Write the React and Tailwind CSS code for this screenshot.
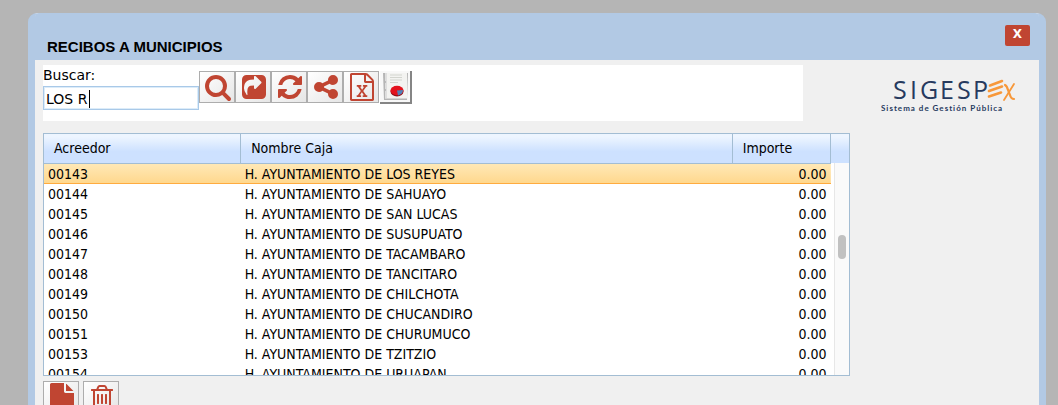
import React from "react";

const ICONS = {
  search:
    "M1216 832q0-185-131.5-316.5t-316.5-131.5-316.5 131.5-131.5 316.5 131.5 316.5 316.5 131.5 316.5-131.5 131.5-316.5zm512 832q0 52-38 90t-90 38q-54 0-90-38l-343-342q-179 124-399 124-143 0-273.5-55.5t-225-150-150-225-55.5-273.5 55.5-273.5 150-225 225-150 273.5-55.5 273.5 55.5 225 150 150 225 55.5 273.5q0 220-124 399l343 343q37 37 37 90z",
  share:
    "M1005 1005l352-352q19-19 19-45t-19-45l-352-352q-30-31-69-14-40 17-40 59v160q-119 0-216 19.5t-162.5 51-114 79-76.5 95.5-44.5 109-21.5 111.5-5 110.5q0 181 167 404 11 12 25 12 7 0 13-3 22-9 19-33-44-354 62-473 46-52 130-75.5t224-23.5v160q0 42 40 59 12 5 24 5 26 0 45-19zM1664 416v960q0 119-84.5 203.5t-203.5 84.5h-960q-119 0-203.5-84.5t-84.5-203.5v-960q0-119 84.5-203.5t203.5-84.5h960q119 0 203.5 84.5t84.5 203.5z",
  refresh:
    "M1639 1056q0 5-1 7-64 268-268 434.5t-478 166.5q-146 0-282.5-55t-243.5-157l-129 129q-19 19-45 19t-45-19-19-45v-448q0-26 19-45t45-19h448q26 0 45 19t19 45-19 45l-137 137q71 66 161 102t187 36q134 0 250-65t186-179q11-17 53-117 8-23 30-23h192q13 0 22.5 9.5t9.5 22.5zm25-800v448q0 26-19 45t-45 19h-448q-26 0-45-19t-19-45 19-45l138-138q-148-137-349-137-134 0-250 65t-186 179q-11 17-53 117-8 23-30 23h-199q-13 0-22.5-9.5t-9.5-22.5v-7q65-268 270-434.5t480-166.5q146 0 284 55.5t245 156.5l130-129q19-19 45-19t45 19 19 45z",
  nodes:
    "M1344 1024q133 0 226.5 93.5t93.5 226.5-93.5 226.5-226.5 93.5-226.5-93.5-93.5-226.5q0-12 2-34l-360-180q-92 86-218 86-133 0-226.5-93.5t-93.5-226.5 93.5-226.5 226.5-93.5q126 0 218 86l360-180q-2-22-2-34 0-133 93.5-226.5t226.5-93.5 226.5 93.5 93.5 226.5-93.5 226.5-226.5 93.5q-126 0-218-86l-360 180q2 22 2 34t-2 34l360 180q92-86 218-86z",
  excel:
    "M1596 380q28 28 48 76t20 88v1152q0 40-28 68t-68 28h-1344q-40 0-68-28t-28-68v-1600q0-40 28-68t68-28h896q40 0 88 20t76 48zm-444-244v376h376q-10-29-22-41l-313-313q-12-12-41-22zm384 1528v-1024h-416q-40 0-68-28t-28-68v-416h-768v1536h1280zm-979-234v106h281v-106h-75l103-161q5-7 10-16.5t7.5-13.5 3.5-4h2q1 4 5 10 2 4 4.5 7.5t6 8 6.5 8.5l107 161h-76v106h291v-106h-68l-192-273 195-282h67v-107h-279v107h74l-103 159q-4 7-10 16.5t-9 13.5l-2 3h-2q-1-4-5-10-6-11-17-23l-106-159h76v-107h-290v107h68l189 272-194 283h-68z",
  file:
    "M1152 512v-472q22 14 36 28l408 408q14 14 28 36h-472zm-128 32q0 40 28 68t68 28h544v1056q0 40-28 68t-68 28h-1344q-40 0-68-28t-28-68v-1600q0-40 28-68t68-28h800v544z",
  trash:
    "M704 736v576q0 14-9 23t-23 9h-64q-14 0-23-9t-9-23v-576q0-14 9-23t23-9h64q14 0 23 9t9 23zm256 0v576q0 14-9 23t-23 9h-64q-14 0-23-9t-9-23v-576q0-14 9-23t23-9h64q14 0 23 9t9 23zm256 0v576q0 14-9 23t-23 9h-64q-14 0-23-9t-9-23v-576q0-14 9-23t23-9h64q14 0 23 9t9 23zm128 724v-948h-896v948q0 22 7 40.5t14.5 27 10.5 8.5h832q3 0 10.5-8.5t14.5-27 7-40.5zm-672-1076h448l-48-117q-7-9-17-11h-317q-10 2-17 11zm928 32v64q0 14-9 23t-23 9h-96v948q0 83-47 143.5t-113 60.5h-832q-66 0-113-58.5t-47-141.5v-952h-96q-14 0-23-9t-9-23v-64q0-14 9-23t23-9h309l70-167q15-37 54-63t79-26h320q40 0 79 26t54 63l70 167h309q14 0 23 9t9 23z",
};

const TOOLS = [
  ["search", "Buscar"],
  ["share", "Enviar"],
  ["refresh", "Actualizar"],
  ["nodes", "Compartir"],
  ["excel", "Exportar a Excel"],
];

const ROWS = [
  ["00143", "H. AYUNTAMIENTO DE LOS REYES"],
  ["00144", "H. AYUNTAMIENTO DE SAHUAYO"],
  ["00145", "H. AYUNTAMIENTO DE SAN LUCAS"],
  ["00146", "H. AYUNTAMIENTO DE SUSUPUATO"],
  ["00147", "H. AYUNTAMIENTO DE TACAMBARO"],
  ["00148", "H. AYUNTAMIENTO DE TANCITARO"],
  ["00149", "H. AYUNTAMIENTO DE CHILCHOTA"],
  ["00150", "H. AYUNTAMIENTO DE CHUCANDIRO"],
  ["00151", "H. AYUNTAMIENTO DE CHURUMUCO"],
  ["00153", "H. AYUNTAMIENTO DE TZITZIO"],
  ["00154", "H. AYUNTAMIENTO DE URUAPAN"],
];

function ToolButton({ icon, label }) {
  return (
    <button
      type="button"
      aria-label={label}
      className="flex h-8 w-9 shrink-0 items-center justify-center border border-[#adadad] bg-linear-to-br from-white to-[#e6e6e6] pl-0.5 text-[#c04532]"
    >
      <svg viewBox="0 0 1792 1792" className="size-7 shrink-0" fill="currentColor" fillRule="evenodd" aria-hidden="true">
        <path d={ICONS[icon]} />
      </svg>
    </button>
  );
}

function ReportIcon() {
  return (
    <svg viewBox="0 0 27 28" className="h-7 w-[27px]" aria-hidden="true">
      <path d="M1 0H26L25 27H2Z" fill="#b5b5b5" />
      <path d="M3 0H25V25.500H3Z" fill="#f3f3f1" />
      <path d="M3 0H5V25H3Z" fill="#dedede" />
      <path d="M3 9H4M3 17H4" stroke="#999" />
      <path d="M8 2H20M8 4.500H20M8 7H20M8 9.500H16" stroke="#d3d5cf" />
      <ellipse cx="15" cy="18.500" rx="6.500" ry="5" fill="#8d1019" />
      <ellipse cx="15" cy="17.500" rx="6.500" ry="4.700" fill="#e3121d" />
      <path d="M15 17.500L21 17Q21 21 16 22.500Z" fill="#4f84bb" />
    </svg>
  );
}

function Logo() {
  return (
    <svg viewBox="0 0 136 38" className="h-[38px] w-[136px] shrink-0" role="img" aria-label="SIGESPEX">
      <g fill="#263a5e">
        <text x="12 29 39 59 76 92" y="22" fontSize="25" fontFamily="'Open Sans', 'Noto Sans', sans-serif">SIGESP</text>
        <text x="0" y="34" fontSize="8" fontWeight="700" fontFamily="Lato, sans-serif" className="tracking-[1px]">Sistema de Gestión Pública</text>
      </g>
      <g fill="none" stroke="#f7983a" strokeLinecap="round">
        <path d="M109 8.500L121 4" strokeWidth="2.600" />
        <path d="M108 14L121 9.500" strokeWidth="2.600" />
        <path d="M108 19.500L120 15.500" strokeWidth="2.600" />
        <path d="M124 8Q126 9 127 13L129 18Q130 22 133 22" strokeWidth="2.200" />
        <path d="M133 7L123 23" strokeWidth="1.800" />
      </g>
    </svg>
  );
}

export default function App() {
  return (
    <div className="h-screen overflow-hidden bg-[#b5b5b5] pt-[13px] pr-3 pl-7 font-['DejaVu_Sans_Condensed','DejaVu_Sans',sans-serif] text-sm text-black">
      <main className="min-h-screen rounded-t-[9px] border-x-7 border-[#b2c9e4] bg-[#f0f0f0]">
        <header className="flex h-[47px] items-start justify-between rounded-t-sm bg-[#b2c9e4] pt-3 pr-[9px] pl-3">
          <h1 className="pt-3 font-['Liberation_Sans',Arial,sans-serif] text-[15px] leading-5 font-bold">RECIBOS A MUNICIPIOS</h1>
          <button type="button" aria-label="Cerrar" className="flex h-[21px] w-[25px] items-start justify-center rounded-xs bg-[#c04532] pt-px font-['DejaVu_Sans',sans-serif] text-xs leading-4 font-bold text-white">
            X
          </button>
        </header>

        <div className="flex items-start justify-between pt-[5px] pr-[22px] pl-2">
          <div className="min-w-0 max-w-[807px] grow">
            <form className="mr-[47px] flex h-14 items-start bg-white" onSubmit={(e) => e.preventDefault()}>
              <div className="flex w-[156px] flex-col font-['DejaVu_Sans',sans-serif]">
                <label htmlFor="buscar" className="h-[21px] leading-5">Buscar:</label>
                <div className="relative">
                  <input
                    id="buscar"
                    type="text"
                    defaultValue="LOS R"
                    className="h-6 w-full border border-[#a9c9e8] bg-white px-0.5 pt-0.5 text-sm shadow-[inset_0_0_0_1px_#dcecf9] outline-none"
                  />
                  <span className="absolute top-1 left-[46px] h-[18px] w-px bg-black" aria-hidden="true" />
                </div>
              </div>
              <div className="flex pt-1.5">
                {TOOLS.map(([icon, label]) => (
                  <ToolButton key={icon} icon={icon} label={label} />
                ))}
              </div>
              <button type="button" aria-label="Reporte" className="mt-1.5 ml-px flex h-[33px] w-8 shrink-0 justify-center border-r-2 border-b-2 border-[#858585] bg-[#f8f8f8] pt-0.5">
                <ReportIcon />
              </button>
            </form>

            <div className="mt-3 flex h-[243px] overflow-hidden border border-[#a3bdd3] bg-white">
              <div className="min-w-0 grow overflow-hidden">
                <table className="w-full table-fixed border-collapse">
                  <colgroup>
                    <col className="w-1/4" />
                    <col className="w-[62.500%]" />
                    <col className="w-1/8" />
                  </colgroup>
                  <thead>
                    <tr className="h-[29px] bg-linear-to-b from-[#edf5ff] from-10% to-[#cde1ff] to-60% text-left">
                      <th className="border-r border-b border-[#a3bdd3] px-2.5 font-normal">Acreedor</th>
                      <th className="border-r border-b border-[#a3bdd3] px-2.5 font-normal">Nombre Caja</th>
                      <th className="border-r border-b border-[#a3bdd3] px-2.5 font-normal">Importe</th>
                    </tr>
                  </thead>
                  <tbody>
                    {ROWS.map(([code, name], i) => (
                      <tr
                        key={code}
                        className={i === 0 ? "h-5 bg-linear-to-b from-[#ffe9b8] to-[#ffd78b] shadow-[inset_0_1px_0_#f4c56d,inset_0_-1px_0_#ffab3f]" : "h-5"}
                      >
                        <td className="px-1 py-0 leading-5">{code}</td>
                        <td className="px-1 py-0 leading-5 whitespace-nowrap">{name}</td>
                        <td className="px-1 py-0 text-right leading-5">0.00</td>
                      </tr>
                    ))}
                  </tbody>
                </table>
              </div>
              <div className="flex w-[18px] shrink-0 flex-col" aria-hidden="true">
                <div className="h-[29px] shrink-0 bg-linear-to-b from-[#edf5ff] from-10% to-[#cde1ff] to-60%" />
                <div className="ml-[3px] grow border-l border-[#e7e7e7] bg-[#fafafa] px-[3px] pt-[72px]">
                  <div className="h-6 w-2 rounded-full bg-[#c1c1c1]" />
                </div>
              </div>
            </div>

            <div className="mt-[5px] flex gap-1">
              <ToolButton icon="file" label="Nuevo" />
              <ToolButton icon="trash" label="Eliminar" />
            </div>
          </div>
          <div className="shrink-0 pt-3">
            <Logo />
          </div>
        </div>
      </main>
    </div>
  );
}
